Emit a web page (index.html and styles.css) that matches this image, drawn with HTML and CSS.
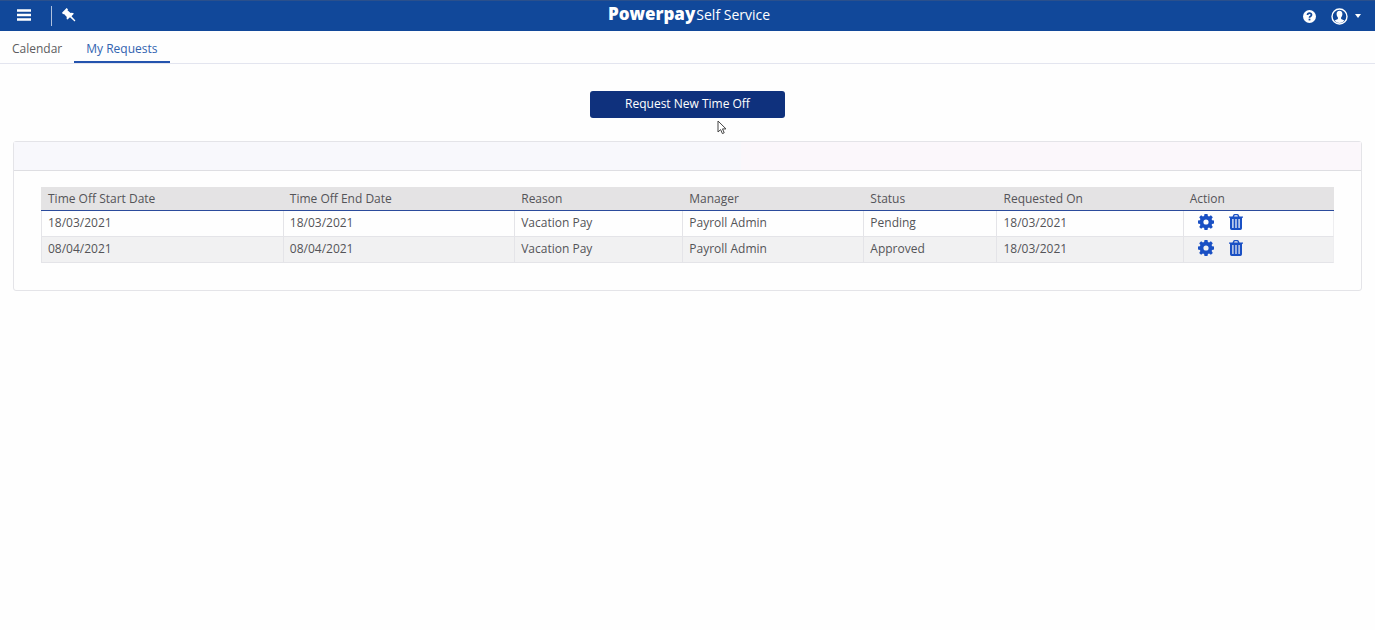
FILE: index.html
```html
<!DOCTYPE html>
<html lang="en">
<head>
<meta charset="utf-8">
<title>Powerpay Self Service</title>
<link rel="stylesheet" href="styles.css">
</head>
<body>
<svg class="sprite" width="0" height="0" aria-hidden="true">
  <symbol id="gear" viewBox="0 0 16 16">
    <path fill-rule="evenodd" d="M6.500 0h3l.4 2 1.200.5 1.800-1.200 1.900 1.900-1.200 1.800.5 1.200 2 .4v2.900l-2 .4-.5 1.200 1.200 1.800-1.900 1.900-1.800-1.200-1.200.5-.4 2h-3l-.4-2-1.200-.5-1.800 1.200-1.900-1.900 1.200-1.800-.5-1.200-2-.4V6.600l2-.4.5-1.200L1.200 3.200l1.900-1.900 1.800 1.200L6.100 2zM8 5.400a2.600 2.600 0 1 0 0 5.200 2.600 2.600 0 0 0 0-5.200z"/>
  </symbol>
  <symbol id="trash" viewBox="0 0 14 16">
    <path fill-rule="evenodd" d="M3.500 2.500L4.500.6Q4.800 0 5.600 0h2.800q.8 0 1.100.6l1 1.900H14v1.300h-1V14.300q0 1.700-1.700 1.700H2.700Q1 16 1 14.300V3.800H0V2.500zM5.100 2.500h3.800L8.300 1.200H5.700zM3.300 5v9h1.200V5zM6.400 5v9h1.200V5zM9.500 5v9h1.200V5z"/>
  </symbol>
</svg>

<header class="topbar">
  <div class="topbar-left">
    <button class="icon-button menu" type="button" aria-label="Menu">
      <svg width="14" height="12" viewBox="0 0 14 12"><path d="M0 1.500h14M0 6h14M0 10.500h14" stroke="currentColor" stroke-width="2.400"/></svg>
    </button>
    <button class="icon-button pin" type="button" aria-label="Pin menu">
      <svg width="14" height="14" viewBox="0 0 14 14" fill="currentColor"><path d="M4.600 0l1.400 1.200-.5 1L8.600 5q1.700-.6 2.900.2l.3.500-2.300 2.500L13.400 12.600l-.8.9-4.600-4.200-2.500 2.300-.6-.4Q4.300 10.300 4.800 9L2 5.900l-1 .4L0 4.800z"/></svg>
    </button>
  </div>
  <div class="brand"><strong class="brand-name">Powerpay</strong><span class="brand-product">Self Service</span></div>
  <div class="topbar-right">
    <button class="icon-button" type="button" aria-label="Help">
      <svg width="13" height="13" viewBox="0 0 13 13"><circle cx="6.500" cy="6.500" r="6.500" fill="#fff"/><path d="M4.500 5Q4.600 3.200 6.500 3.200t2 1.700Q8.500 5.800 7.300 6.400 6.500 6.800 6.500 7.700" fill="none" stroke="#11489a" stroke-width="1.700"/><path d="M5.600 8.700h1.800v1.700H5.600z" fill="#11489a"/></svg>
    </button>
    <button class="icon-button account" type="button" aria-label="Account">
      <svg width="17" height="17" viewBox="0 0 17 17"><circle cx="8.500" cy="8.500" r="7.500" fill="none" stroke="#fff" stroke-width="1.400"/><path d="M8.500 2.800c2 0 3 1.400 2.900 3.500-.1 1.500-.7 2.500-1.300 3.100v1.500l3.300 1.500A6.500 6.500 0 0 1 8.500 15a6.500 6.500 0 0 1-4.900-2.600l3.300-1.500V9.400C6.300 8.800 5.700 7.800 5.600 6.300c-.1-2.100.9-3.500 2.900-3.500z" fill="#fff"/></svg>
      <svg width="6" height="4" viewBox="0 0 6 4"><path d="M0 0h6L3 4z" fill="#fff"/></svg>
    </button>
  </div>
</header>

<nav class="tabs">
  <a class="tab" href="#calendar">Calendar</a>
  <a class="tab tab-active" href="#requests" aria-current="page">My Requests</a>
</nav>

<main class="content">
  <div class="request-row">
    <button class="primary" type="button">Request New Time Off</button>
    <svg class="pointer" width="10" height="15" viewBox="0 0 10 15"><path d="M1 1v11l2.600-2.400 1.800 4 1.800-.8-1.700-3.900H9z" fill="#fff" stroke="#444" stroke-width="1"/></svg>
  </div>

  <section class="panel">
    <div class="panel-head"></div>
    <div class="panel-body">
      <table class="requests">
        <colgroup><col class="c-start"><col class="c-end"><col class="c-reason"><col class="c-manager"><col class="c-status"><col class="c-requested"><col class="c-action"></colgroup>
        <thead>
          <tr><th>Time Off Start Date</th><th>Time Off End Date</th><th>Reason</th><th>Manager</th><th>Status</th><th>Requested On</th><th>Action</th></tr>
        </thead>
        <tbody>
          <tr><td>18/03/2021</td><td>18/03/2021</td><td>Vacation Pay</td><td>Payroll Admin</td><td>Pending</td><td>18/03/2021</td>
            <td><div class="actions"><button class="icon-button" type="button" aria-label="Edit"><svg width="16" height="16"><use href="#gear"/></svg></button><button class="icon-button" type="button" aria-label="Delete"><svg width="14" height="16"><use href="#trash"/></svg></button></div></td></tr>
          <tr><td>08/04/2021</td><td>08/04/2021</td><td>Vacation Pay</td><td>Payroll Admin</td><td>Approved</td><td>18/03/2021</td>
            <td><div class="actions"><button class="icon-button" type="button" aria-label="Edit"><svg width="16" height="16"><use href="#gear"/></svg></button><button class="icon-button" type="button" aria-label="Delete"><svg width="14" height="16"><use href="#trash"/></svg></button></div></td></tr>
        </tbody>
      </table>
    </div>
  </section>
</main>
</body>
</html>
```
FILE: styles.css
```css
* { box-sizing: border-box; }
body {
  margin: 0;
  background: #fefefe;
  color: #545458;
  font: 12px/18px "Open Sans", "Noto Sans", sans-serif;
}
.sprite { position: absolute; }
button { font: inherit; cursor: pointer; }
.icon-button {
  display: flex;
  align-items: center;
  padding: 0;
  border: 0;
  background: none;
  color: inherit;
}
.icon-button svg { display: block; fill: currentColor; }

.topbar {
  display: grid;
  grid-template-columns: 1fr auto 1fr;
  align-items: center;
  height: 31px;
  background: #11489a;
  border-top: 1px solid #2b508c;
  color: #fff;
}
.topbar-left { display: flex; align-items: center; }
.menu {
  height: 20px;
  padding: 0 20px 2px 17px;
  border-right: 1px solid #b0c2de;
}
.pin { padding: 0 0 2px 10px; }
.topbar-right {
  display: flex;
  justify-content: flex-end;
  gap: 15px;
  padding-right: 14px;
}
.account { gap: 7px; }
.brand {
  display: flex;
  align-items: baseline;
  gap: 1px;
  padding: 0 0 3px 3px;
  line-height: 24px;
}
.brand-name { font-size: 17px; font-weight: 800; }
.brand-product { font-size: 14px; }

.tabs {
  display: flex;
  border-bottom: 1px solid #e3e5ef;
}
.tab {
  height: 32px;
  padding: 9px 12px;
  color: #5c5c60;
  text-decoration: none;
}
.tab-active {
  border-bottom: 2px solid #2453ae;
  color: #3263b0;
}

.content { padding: 27px 13px; }
.request-row { position: relative; display: flex; justify-content: center; }
.primary {
  width: 195px;
  height: 27px;
  padding: 0 0 1px;
  border: 0;
  border-radius: 3px;
  background: #0f317d;
  color: #fff;
}
.pointer { position: absolute; top: 29px; left: calc(50% + 29px); }

.panel {
  margin-top: 23px;
  border: 1px solid #e4e4e8;
  border-radius: 3px;
}
.panel-head {
  height: 29px;
  border-bottom: 1px solid #dedee2;
  background: linear-gradient(90deg, #f8f8fc 54%, #fbf7fb 54%);
}
.panel-body { padding: 16px 27px 27px; }

.requests {
  width: 100%;
  table-layout: fixed;
  border-collapse: separate;
  border-spacing: 0;
}
.c-start { width: 18.7%; }
.c-end { width: 17.9%; }
.c-reason { width: 13%; }
.c-manager { width: 14%; }
.c-status { width: 10.3%; }
.c-requested { width: 14.4%; }
.c-action { width: 11.7%; }
.requests th {
  height: 24px;
  padding: 1px 7px 0;
  border-bottom: 1px solid #2b4b9c;
  background: #e4e3e4;
  font-weight: 400;
  text-align: left;
}
.requests td {
  height: 26px;
  padding: 0 6px 2px;
  border-bottom: 1px solid #e4e4e8;
  border-left: 1px solid #e4e4e8;
}
.requests td:last-child { border-right: 1px solid #eeeef0; }
.requests tbody tr:nth-child(even) { background: #f1f1f2; }
.actions {
  display: flex;
  gap: 15px;
  padding: 0 0 1px 8px;
  color: #1a50c4;
}
```
